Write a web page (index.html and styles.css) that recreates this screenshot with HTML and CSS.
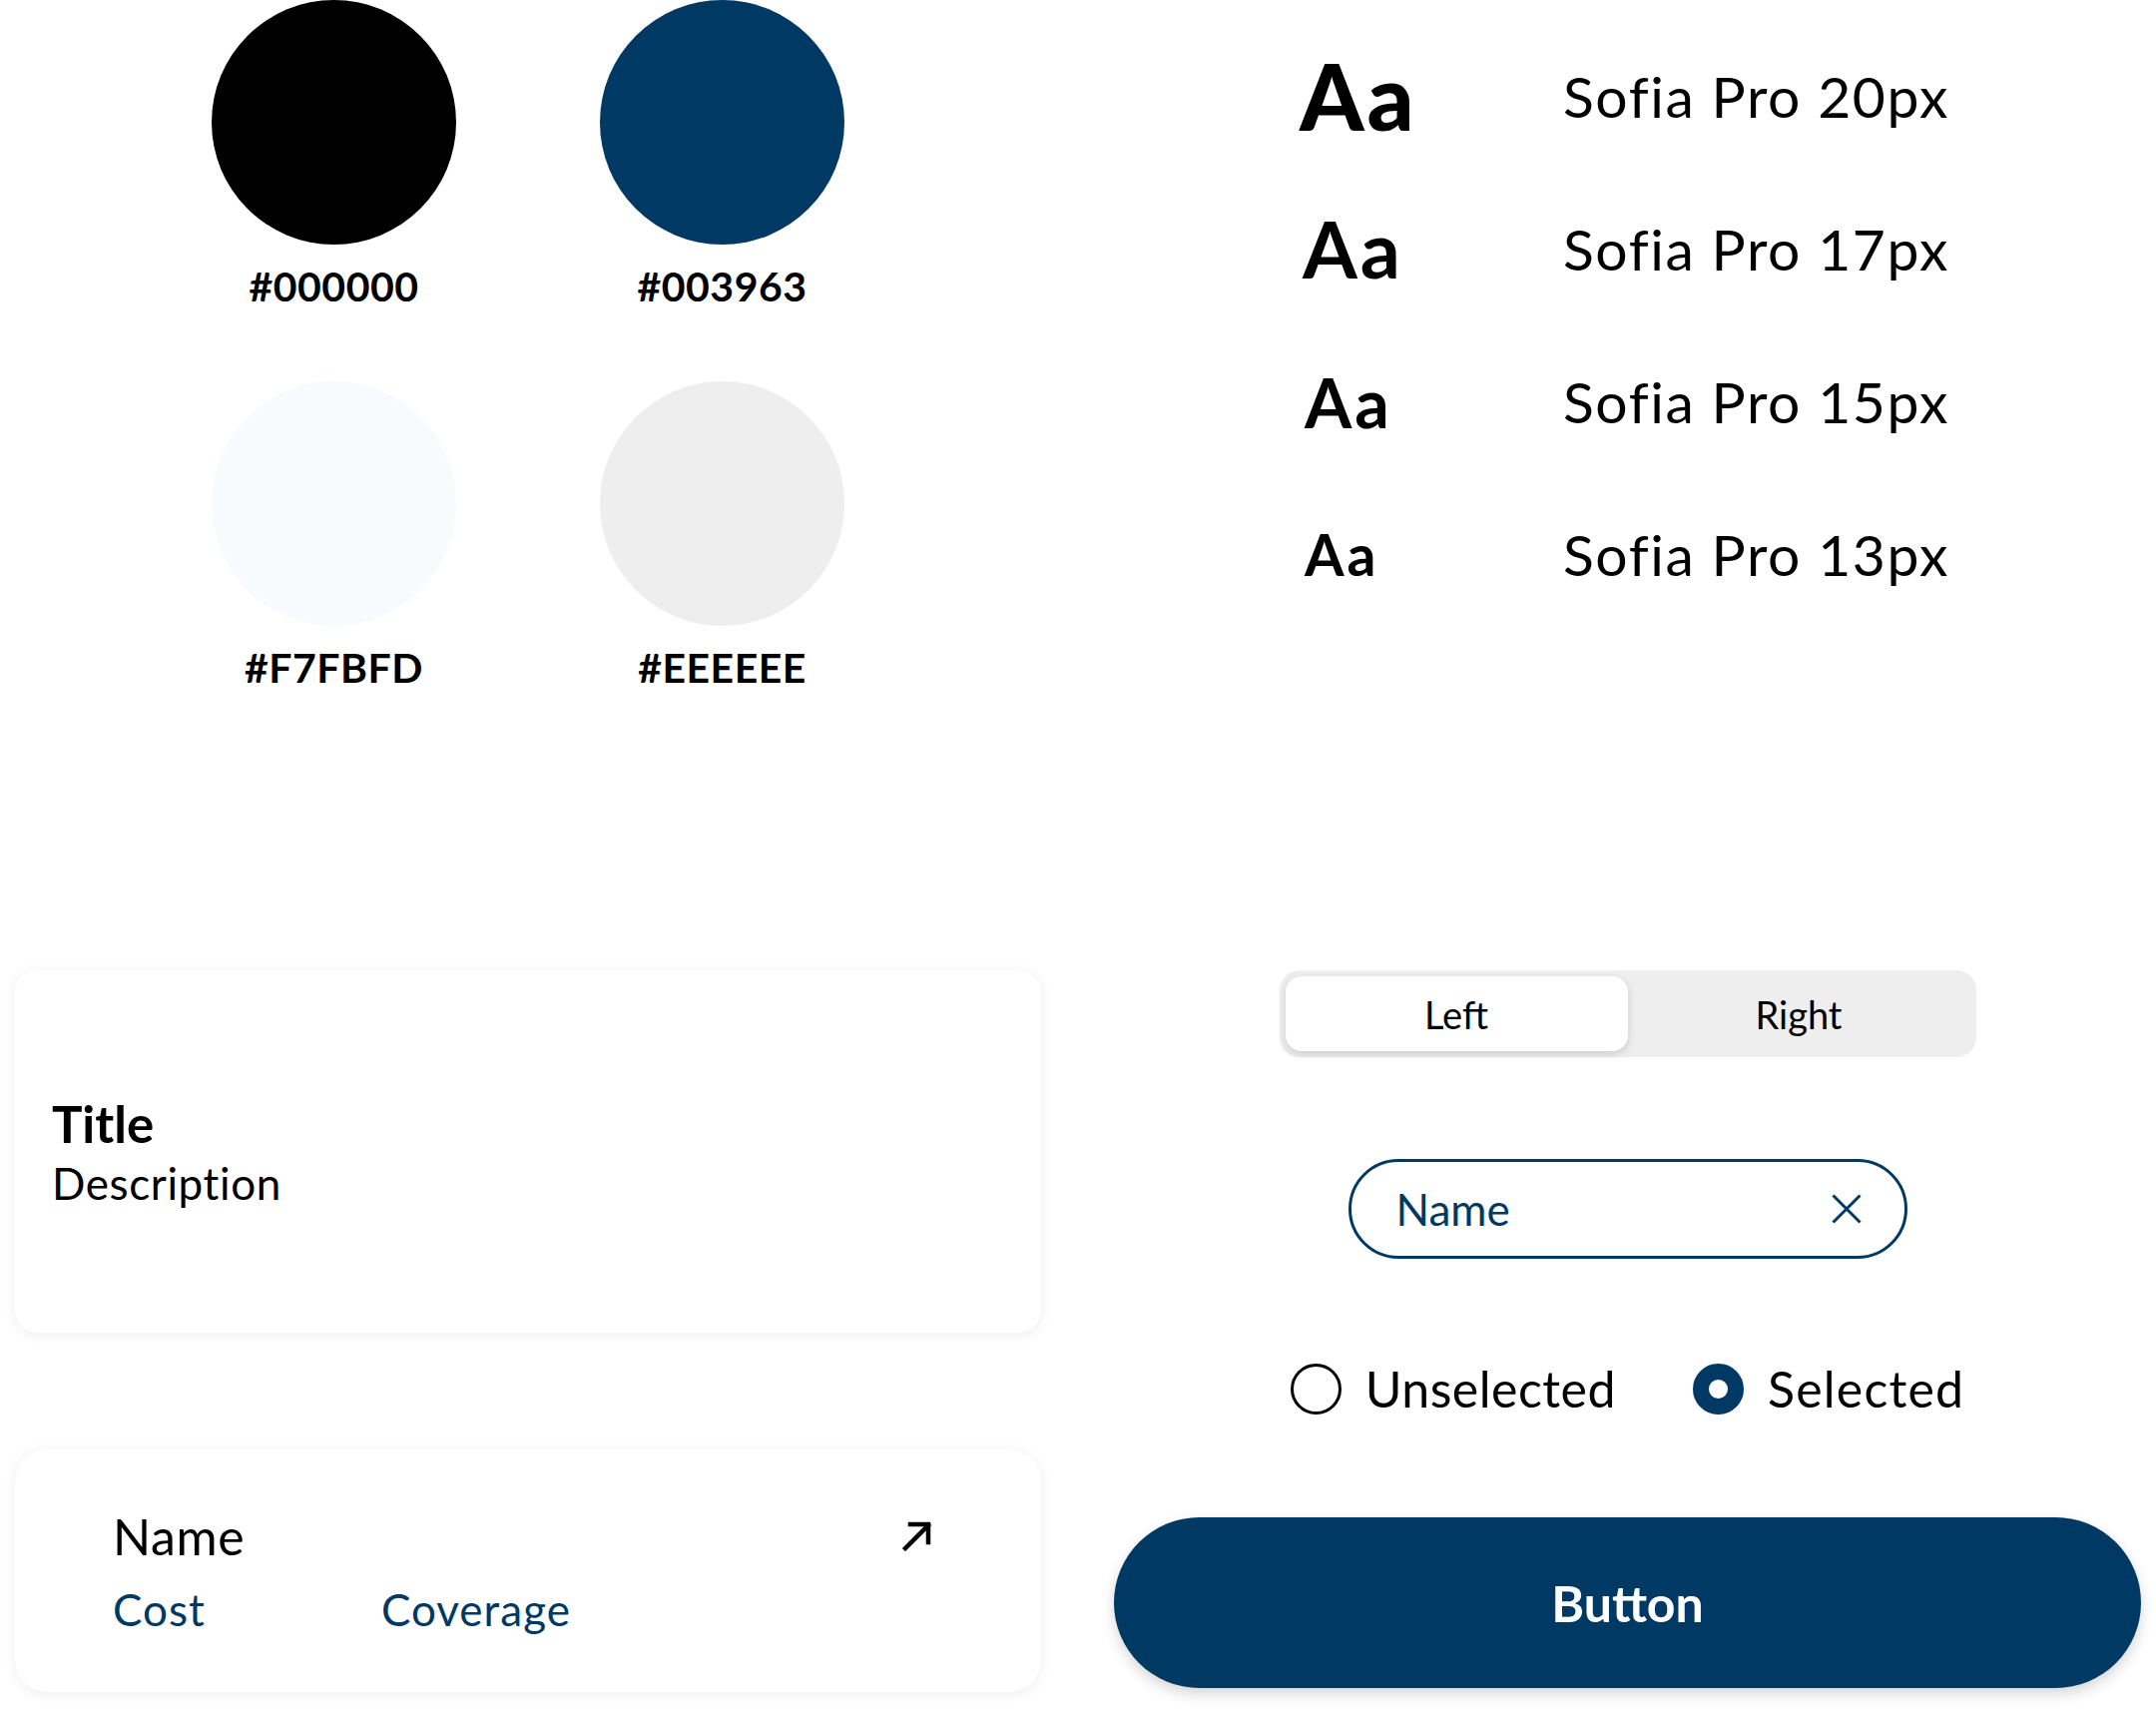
FILE: index.html
```html
<!DOCTYPE html>
<html lang="en">
<head>
<meta charset="utf-8">
<title>Style guide</title>
<link rel="stylesheet" href="styles.css">
</head>
<body>
<div class="page">
  <div class="swatches">
    <div class="swatch"><div class="dot dot-black"></div><div class="hex">#000000</div></div>
    <div class="swatch"><div class="dot dot-navy"></div><div class="hex">#003963</div></div>
    <div class="swatch"><div class="dot dot-ice"></div><div class="hex">#F7FBFD</div></div>
    <div class="swatch"><div class="dot dot-gray"></div><div class="hex">#EEEEEE</div></div>
  </div>

  <div class="type-scale">
    <div class="type-row"><span class="aa aa-20">Aa</span><span class="type-name">Sofia Pro 20px</span></div>
    <div class="type-row"><span class="aa aa-17">Aa</span><span class="type-name">Sofia Pro 17px</span></div>
    <div class="type-row"><span class="aa aa-15">Aa</span><span class="type-name">Sofia Pro 15px</span></div>
    <div class="type-row"><span class="aa aa-13">Aa</span><span class="type-name">Sofia Pro 13px</span></div>
  </div>

  <div class="cards">
    <div class="card card-info">
      <div class="card-title">Title</div>
      <div class="card-desc">Description</div>
    </div>
    <div class="card card-plan">
      <div class="plan-head">
        <span class="plan-name">Name</span>
        <svg class="plan-arrow" viewBox="0 0 32 32" width="32" height="32" aria-hidden="true">
          <path d="M4 29 L27 6" fill="none" stroke="#000" stroke-width="4.5" stroke-linecap="square"/>
          <path d="M9 5 H27 V23" fill="none" stroke="#000" stroke-width="4.5" stroke-linecap="square"/>
        </svg>
      </div>
      <div class="plan-meta">
        <span>Cost</span>
        <span>Coverage</span>
      </div>
    </div>
  </div>

  <div class="controls">
    <div class="segmented">
      <div class="seg-tab seg-active">Left</div>
      <div class="seg-tab">Right</div>
    </div>

    <div class="chip-input">
      <span class="chip-text">Name</span>
      <svg class="chip-clear" viewBox="0 0 30 30" width="30" height="30" aria-hidden="true">
        <path d="M1.5 1.5 L28.5 28.5 M28.5 1.5 L1.5 28.5" fill="none" stroke="#003963" stroke-width="3"/>
      </svg>
    </div>

    <div class="radios">
      <div class="radio"><span class="radio-dot"></span><span class="radio-label">Unselected</span></div>
      <div class="radio"><span class="radio-dot radio-on"></span><span class="radio-label label-on">Selected</span></div>
    </div>

    <div class="button">Button</div>
  </div>
</div>
</body>
</html>
```

FILE: styles.css
```css
* { box-sizing: border-box; }

html, body {
  margin: 0;
  padding: 0;
  background: #ffffff;
}

body {
  font-family: Lato, "Liberation Sans", sans-serif;
  color: #000000;
  width: 2160px;
  height: 1713px;
  overflow: hidden;
}

.page {
  display: grid;
  grid-template-columns: 1028px 1029px;
  grid-template-rows: 972px auto;
  column-gap: 73px;
  padding: 0 15px;
}

/* ---------- swatches ---------- */
.swatches {
  display: grid;
  grid-template-columns: 245px 245px;
  column-gap: 144px;
  row-gap: 71px;
  justify-content: center;
  align-content: start;
}

.swatch {
  display: flex;
  flex-direction: column;
  align-items: center;
}

.dot {
  width: 245px;
  height: 245px;
  border-radius: 50%;
}
.dot-black { background: #000000; }
.dot-navy { background: #003963; }
.dot-ice { background: #F7FBFD; }
.dot-gray { background: #EEEEEE; }

.hex {
  margin-top: 18px;
  font-size: 41px;
  line-height: 48px;
  font-weight: 700;
  letter-spacing: 0.5px;
}

/* ---------- type scale ---------- */
.type-scale {
  padding-left: 186px;
  padding-top: 20px;
}

.type-row {
  display: grid;
  grid-template-columns: 264px auto;
  align-items: center;
  height: 153px;
}

.aa {
  font-weight: 900;
  line-height: 1.2;
  letter-spacing: 3px;
}
.aa-20 { font-size: 92px; }
.aa-17 { font-size: 79px; font-weight: 700; padding-left: 3px; }
.aa-15 { font-size: 68px; font-weight: 700; padding-left: 5px; }
.aa-13 { font-size: 57px; font-weight: 700; padding-left: 5px; }

.type-name {
  font-size: 57px;
  line-height: 1.2;
  letter-spacing: 1.6px;
}

/* ---------- cards ---------- */
.cards {
  display: flex;
  flex-direction: column;
  gap: 117px;
}

.card {
  background: #ffffff;
  box-shadow: 0 2px 14px rgba(0, 0, 0, 0.07);
}

.card-info {
  height: 363px;
  border-radius: 22px;
  padding-left: 37px;
  display: flex;
  flex-direction: column;
  justify-content: center;
}

.card-title {
  font-size: 51px;
  line-height: 62px;
  font-weight: 700;
}

.card-desc {
  font-size: 44px;
  line-height: 56px;
  letter-spacing: 0.6px;
}

.card-plan {
  height: 243px;
  border-radius: 32px;
  padding: 0 108px 0 98px;
  display: flex;
  flex-direction: column;
  justify-content: center;
  gap: 17px;
}

.plan-head {
  display: flex;
  justify-content: space-between;
  align-items: flex-start;
}

.plan-name {
  font-size: 50px;
  line-height: 60px;
  letter-spacing: 0.6px;
}

.plan-arrow {
  margin-top: 13px;
}

.plan-meta {
  display: grid;
  grid-template-columns: 269px auto;
  font-size: 44px;
  line-height: 53px;
  letter-spacing: 1px;
  color: #003963;
}

/* ---------- controls ---------- */
.controls {
  display: flex;
  flex-direction: column;
  align-items: center;
}

.segmented {
  width: 698px;
  height: 87px;
  background: #EEEEEE;
  border-radius: 20px;
  padding: 6px;
  display: grid;
  grid-template-columns: 1fr 1fr;
}

.seg-tab {
  display: flex;
  align-items: center;
  justify-content: center;
  font-size: 38px;
  border-radius: 16px;
}

.seg-active {
  background: #ffffff;
  box-shadow: 0 3px 8px rgba(0, 0, 0, 0.14);
}

.chip-input {
  margin-top: 102px;
  width: 560px;
  height: 100px;
  border: 3.5px solid #003963;
  border-radius: 50px;
  padding: 0 43px 0 45px;
  display: flex;
  align-items: center;
  justify-content: space-between;
}

.chip-text {
  font-size: 44px;
  color: #003963;
}

.radios {
  margin-top: 104px;
  display: flex;
  gap: 77px;
}

.radio {
  display: flex;
  align-items: center;
  gap: 24px;
}

.radio-dot {
  width: 51px;
  height: 51px;
  border-radius: 50%;
  border: 3px solid #000000;
  background: #ffffff;
}

.radio-on {
  border: 16px solid #003963;
}

.radio-label {
  font-size: 50px;
  line-height: 52px;
  letter-spacing: 0.5px;
}

.label-on {
  letter-spacing: 1.2px;
}

.button {
  margin-top: 103px;
  width: 100%;
  height: 171px;
  border-radius: 86px;
  background: #003963;
  color: #ffffff;
  font-size: 50px;
  font-weight: 700;
  display: flex;
  align-items: center;
  justify-content: center;
  box-shadow: 0 6px 14px rgba(0, 0, 0, 0.16);
}
```
